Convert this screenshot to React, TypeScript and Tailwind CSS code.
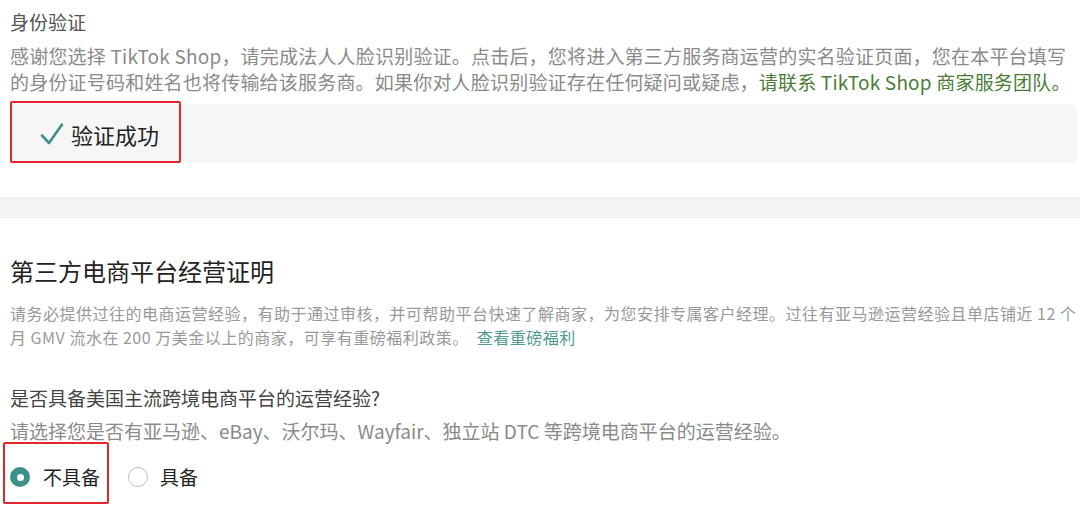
import React from "react";

function Check() {
  return (
    <svg width="24" height="24" viewBox="0 0 24 24" className="shrink-0">
      <path d="M2 13.5 L9 21 L22 2.5" fill="none" stroke="#3e908a" strokeWidth="2.6" strokeLinecap="round" strokeLinejoin="round" />
    </svg>
  );
}

export default function App() {
  return (
    <div className="relative w-[1080px] h-[507px] overflow-hidden bg-white font-['Noto_Sans_CJK_SC',sans-serif]">
      <section className="pl-[10px] pr-[3px] pt-[9px]">
        <h3 className="text-[19px] leading-[26px] text-[#555]">身份验证</h3>
        <p className="mt-[8px] text-[19px] leading-[26px] tracking-[0.2px] text-[#8a8a8a]">
          感谢您选择 TikTok Shop，请完成法人人脸识别验证。点击后，您将进入第三方服务商运营的实名验证页面，您在本平台填写的身份证号码和姓名也将传输给该服务商。如果你对人脸识别验证存在任何疑问或疑虑，
          <span className="text-[#4b7d38]">请联系 TikTok Shop 商家服务团队。</span>
        </p>
        <div className="mt-[9px] h-[59px] rounded-r-[6px] bg-[#f6f6f6] flex items-center pl-[30px] gap-[7px]">
          <Check />
          <span className="text-[22px] leading-[30px] text-[#222]">验证成功</span>
        </div>
      </section>

      <div className="mt-[34px] h-[21px] bg-[#f4f4f4] border-y border-[#efefef]" />

      <section className="pl-[10px] pr-[3px]">
        <h2 className="mt-[36px] text-[24px] leading-[34px] text-[#222]">第三方电商平台经营证明</h2>
        <p className="mt-[13px] text-[16px] leading-[24px] tracking-[0.5px] text-[#999]">
          请务必提供过往的电商运营经验，有助于通过审核，并可帮助平台快速了解商家，为您安排专属客户经理。过往有亚马逊运营经验且单店铺近 12 个月 GMV 流水在 200 万美金以上的商家，可享有重磅福利政策。
          <span className="ml-[8px] text-[#4f9b91]">查看重磅福利</span>
        </p>
        <p className="mt-[36px] text-[19px] leading-[26px] text-[#444]">是否具备美国主流跨境电商平台的运营经验?</p>
        <p className="mt-[7px] text-[19px] leading-[26px] text-[#8a8a8a]">
          请选择您是否有亚马逊、eBay、沃尔玛、Wayfair、独立站 DTC 等跨境电商平台的运营经验。
        </p>
        <div className="mt-[20px] flex items-center h-[26px]">
          <label className="flex items-center gap-[13px]">
            <span className="w-[20px] h-[20px] rounded-full bg-[#3e918b] flex items-center justify-center">
              <span className="w-[7px] h-[7px] rounded-full bg-white" />
            </span>
            <span className="text-[19px] leading-[26px] text-[#222]">不具备</span>
          </label>
          <label className="ml-[28px] flex items-center gap-[12px]">
            <span className="w-[20px] h-[20px] rounded-full border-[1.5px] border-[#bdbdbd] bg-white" />
            <span className="text-[19px] leading-[26px] text-[#222]">具备</span>
          </label>
        </div>
      </section>

      <div className="absolute left-[10px] top-[101px] w-[171px] h-[62px] border-2 border-[#e3262b] rounded-[2px]" />
      <div className="absolute left-[3px] top-[442px] w-[106px] h-[62px] border-2 border-[#e3262b] rounded-[2px]" />
    </div>
  );
}
